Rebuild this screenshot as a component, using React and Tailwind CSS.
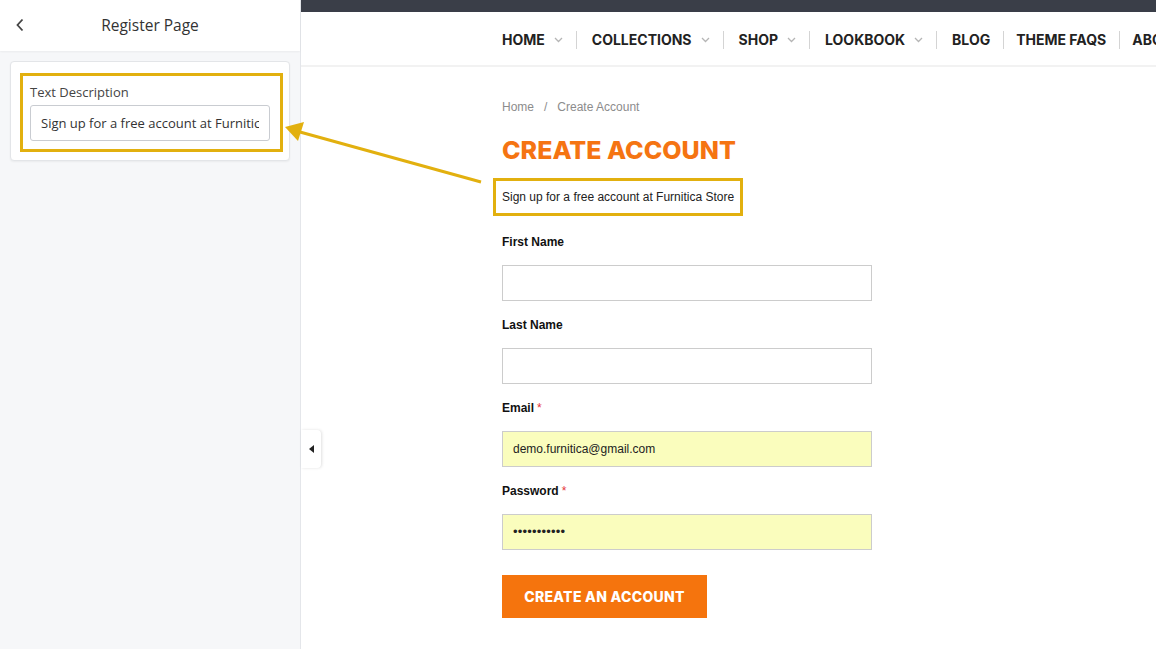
import React from 'react';

const navItems = [
  { label: 'HOME', drop: true },
  { label: 'COLLECTIONS', drop: true },
  { label: 'SHOP', drop: true },
  { label: 'LOOKBOOK', drop: true },
  { label: 'BLOG' },
  { label: 'THEME FAQS' },
  { label: 'ABOUT US' },
];

const fields = [
  { label: 'First Name', value: '' },
  { label: 'Last Name', value: '' },
  { label: 'Email', value: 'demo.furnitica@gmail.com', required: true, filled: true },
  { label: 'Password', value: '•••••••••••', required: true, filled: true, password: true },
];

function Chevron() {
  return (
    <svg width="9" height="6" viewBox="0 0 9 6" className="ml-[9px] mt-[1px]" fill="none">
      <path d="M1 1l3.5 3.5L8 1" stroke="#b5b5b5" strokeWidth="1.3" />
    </svg>
  );
}

function Sidebar() {
  return (
    <aside className="w-[301px] shrink-0 h-full bg-[#f6f7f9] border-r border-[#e4e6ea] flex flex-col font-['Open_Sans',sans-serif]">
      <header className="h-[51px] bg-white flex items-center relative shadow-[0_1px_2px_rgba(0,0,0,0.05)]">
        <svg width="10" height="14" viewBox="0 0 10 14" className="absolute left-[15px] top-[18px]" fill="none">
          <path d="M7.5 1.5L2.5 7l5 5.5" stroke="#444" strokeWidth="1.8" />
        </svg>
        <h1 className="w-full text-center text-[15.5px] text-[#333]">Register Page</h1>
      </header>
      <div className="pl-[10px] pr-[10px] pt-[10px]">
        <div className="bg-white border border-[#e3e5e8] rounded-[4px] shadow-[0_1px_2px_rgba(0,0,0,0.05)] pt-[11px] pl-[9px] pr-[6px] pb-[8px]">
          <div className="border-[3px] border-[#e2b00f] pl-[7px] pr-[10px] pt-[6px] pb-[8px]">
            <div className="text-[13px] leading-[20px] text-[#444]">Text Description</div>
            <input
              readOnly
              value="Sign up for a free account at Furnitica Store"
              className="mt-[3px] w-full h-[36px] border border-[#c9ccd1] rounded-[3px] px-[10px] text-[13px] text-[#333] outline-none bg-white font-['Open_Sans',sans-serif]"
            />
          </div>
        </div>
      </div>
    </aside>
  );
}

function Field({ f }) {
  return (
    <div className="mb-[15px]">
      <div className="h-[18px] leading-[18px] text-[12px] font-bold text-[#111]">
        {f.label}
        {f.required && <span className="text-[#e5343a] font-normal ml-[3px]">*</span>}
      </div>
      <div
        className={`mt-[14px] w-[370px] h-[36px] border border-[#cccccc] flex items-center px-[10px] text-[#222] ${
          f.filled ? 'bg-[#fafdbd]' : 'bg-white'
        } ${f.password ? 'text-[13px] tracking-[0.2px]' : 'text-[12px]'}`}
      >
        {f.value}
      </div>
    </div>
  );
}

export default function App() {
  return (
    <div className="w-[1156px] h-[649px] overflow-hidden flex relative bg-white">
      <Sidebar />

      {/* collapse tab */}
      <div className="absolute left-[301px] top-[430px] w-[20px] h-[38px] bg-white rounded-r-[4px] shadow-[1px_0_3px_rgba(0,0,0,0.12)] flex items-center justify-center">
        <div className="w-0 h-0 border-y-[4px] border-y-transparent border-r-[5px] border-r-[#222]" />
      </div>

      <main className="flex-1 min-w-0 flex flex-col">
        <div className="h-[12px] bg-[#3a3e48]" />
        <nav className="h-[55px] pt-[2px] border-b-2 border-[#f2f2f2] flex items-center overflow-hidden font-['Inter',sans-serif]">
          <div className="ml-[201px] flex items-center whitespace-nowrap">
            {navItems.map((n, i) => (
              <React.Fragment key={n.label}>
                {i > 0 && <div className={`w-px h-[18px] bg-[#d4d4d4] ${navItems[i - 1].drop ? 'ml-[13px] mr-[15px]' : 'ml-[13px] mr-[12px]'}`} />}
                <div className="flex items-center">
                  <span className="text-[14px] font-bold text-[#222]">{n.label}</span>
                  {n.drop && <Chevron />}
                </div>
              </React.Fragment>
            ))}
          </div>
        </nav>

        <section className="pl-[201px] pt-[32px] font-['Liberation_Sans',Arial,sans-serif]">
          <div className="text-[12px] leading-[16px] text-[#8c8c8c]">
            Home<span className="mx-[10px]">/</span>Create Account
          </div>
          <h2 className="mt-[19px] text-[25px] leading-[32px] font-extrabold text-[#f57412] font-['Inter',sans-serif]">
            CREATE ACCOUNT
          </h2>
          <div className="mt-[12px] -ml-[9px] inline-block border-[3px] border-[#e2b00f] px-[6px] text-[12px] leading-[32px] text-[#222]">
            Sign up for a free account at Furnitica Store
          </div>
          <div className="mt-[17px]">
            {fields.map((f) => (
              <Field key={f.label} f={f} />
            ))}
          </div>
          <button className="mt-[10px] w-[205px] h-[43px] bg-[#f5740d] text-white text-[14px] font-extrabold tracking-[0.3px] font-['Inter',sans-serif]">
            CREATE AN ACCOUNT
          </button>
        </section>
      </main>

      {/* annotation arrow */}
      <svg className="absolute left-0 top-0 pointer-events-none" width="1156" height="649">
        <line x1="481" y1="182" x2="300" y2="132" stroke="#e2b00f" strokeWidth="3" />
        <polygon points="285,127 304,122 298,141" fill="#e2b00f" />
      </svg>
    </div>
  );
}
